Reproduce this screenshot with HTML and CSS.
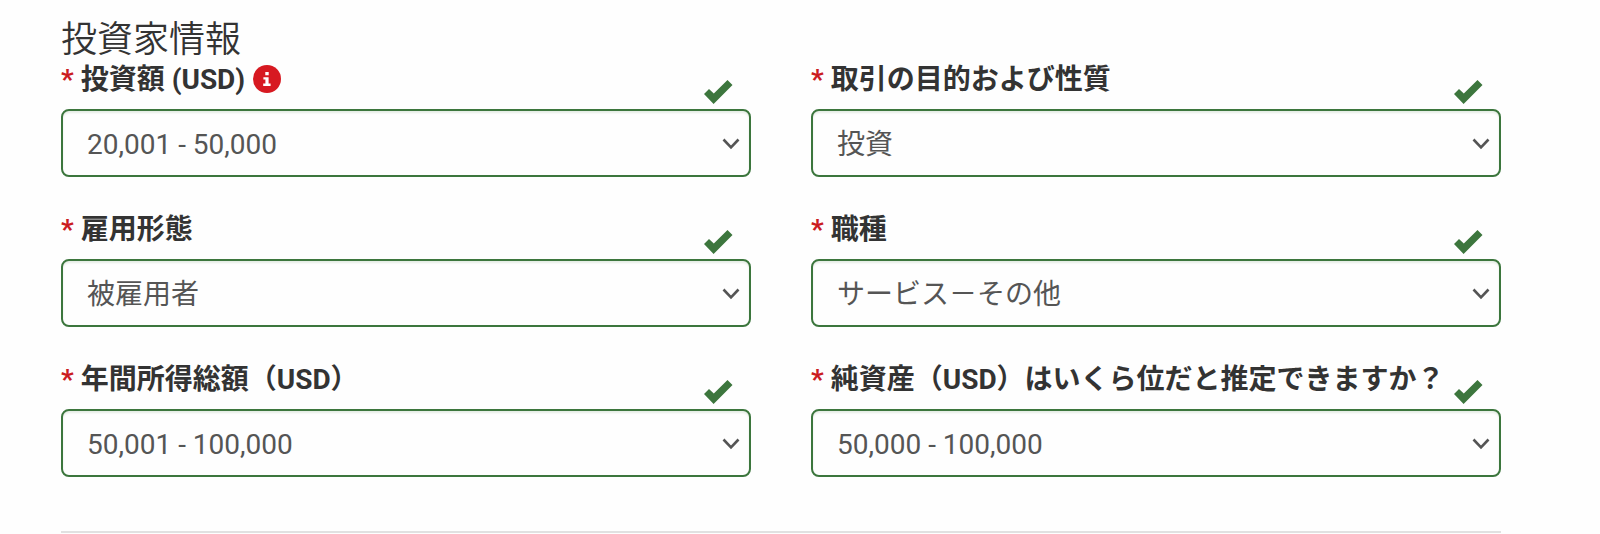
FILE: index.html
```html
<!DOCTYPE html>
<html lang="ja">
  <head>
    <meta charset="UTF-8" />
    <meta name="viewport" content="width=device-width, initial-scale=1.0" />
    <title>投資家情報</title>
    <link rel="stylesheet" href="styles.css">
  </head>
  <body>
    <!-- shared check mark -->
    <svg class="sprite" width="0" height="0">
      <symbol id="check" viewBox="0 0 29 24">
        <path d="M0 14 5 9l4.8 4.5L23.5 0l5 5L9.6 24z" />
      </symbol>
    </svg>
    <form class="investor-form">
      <h2 class="title">投資家情報</h2>
      <div class="fields">
        <div class="field">
          <div class="field-head">
            <label for="amount"><span class="required">*</span> 投資額 (USD)</label>
            <svg class="info" viewBox="0 0 28 28">
              <circle cx="14" cy="14" r="14" />
              <path d="M12.3 7h3.4v3.2h-3.4zM10.4 12.2h5.2v6.4h2v2.4h-7.4v-2.4h2.2v-4h-2z" />
            </svg>
            <svg class="check"><use href="#check" /></svg>
          </div>
          <select id="amount">
            <option>20,001 - 50,000</option>
          </select>
        </div>
        <div class="field">
          <div class="field-head">
            <label for="purpose"><span class="required">*</span> 取引の目的および性質</label>
            <svg class="check"><use href="#check" /></svg>
          </div>
          <select id="purpose">
            <option>投資</option>
          </select>
        </div>
        <div class="field">
          <div class="field-head">
            <label for="employment"><span class="required">*</span> 雇用形態</label>
            <svg class="check"><use href="#check" /></svg>
          </div>
          <select id="employment">
            <option>被雇用者</option>
          </select>
        </div>
        <div class="field">
          <div class="field-head">
            <label for="occupation"><span class="required">*</span> 職種</label>
            <svg class="check"><use href="#check" /></svg>
          </div>
          <select id="occupation">
            <option>サービス－その他</option>
          </select>
        </div>
        <div class="field">
          <div class="field-head">
            <label for="income"><span class="required">*</span> 年間所得総額（USD）</label>
            <svg class="check"><use href="#check" /></svg>
          </div>
          <select id="income">
            <option>50,001 - 100,000</option>
          </select>
        </div>
        <div class="field">
          <div class="field-head">
            <label for="assets"><span class="required">*</span> 純資産（USD）はいくら位だと推定できますか？</label>
            <svg class="check"><use href="#check" /></svg>
          </div>
          <select id="assets">
            <option>50,000 - 100,000</option>
          </select>
        </div>
      </div>
    </form>
  </body>
</html>
```

FILE: styles.css
```css
* {
  box-sizing: border-box;
}
body {
  margin: 0;
  background: #fefefe;
  color: #333;
  font-family: Roboto, "Noto Sans CJK JP", sans-serif;
  font-size: 28px;
  overflow: hidden;
}
.sprite {
  display: block;
}
.investor-form {
  width: 1440px;
  height: 533px;
  margin-left: 61px;
  border-bottom: 2px solid #e1e1e1;
}
.title {
  height: 59px;
  margin: 0;
  padding-top: 15px;
  font-size: 36px;
  font-weight: 350;
  line-height: 50px;
}
.fields {
  display: grid;
  grid-template-columns: 1fr 1fr;
  gap: 32px 60px;
}
.field-head {
  display: flex;
  height: 50px;
}
.field-head label {
  font-weight: 700;
  line-height: 42px;
  white-space: nowrap;
}
.required {
  color: #cb1c22;
}
.info {
  width: 28px;
  height: 28px;
  margin: 6px 0 0 8px;
}
.info circle {
  fill: #d71921;
}
.info path {
  fill: #fff;
}
.check {
  width: 29px;
  height: 24px;
  margin: 21px 18px 0 auto;
  fill: #3c763d;
}
select {
  display: block;
  width: 100%;
  height: 68px;
  padding: 2px 50px 0 24px;
  border: 2px solid #3c763d;
  border-radius: 8px;
  appearance: none;
  background: #fefefe url("data:image/svg+xml,%3Csvg xmlns='http://www.w3.org/2000/svg' width='18' height='12'%3E%3Cpath d='M1.5 1.5 9 9.3l7.5-7.8' fill='none' stroke='%23555' stroke-width='2.6'/%3E%3C/svg%3E") no-repeat right 9px top 27px;
  box-shadow: inset 0 2px 2px rgba(60, 118, 61, 0.12);
  color: #555;
  font-family: inherit;
  font-size: 28px;
  font-weight: 400;
}
```
